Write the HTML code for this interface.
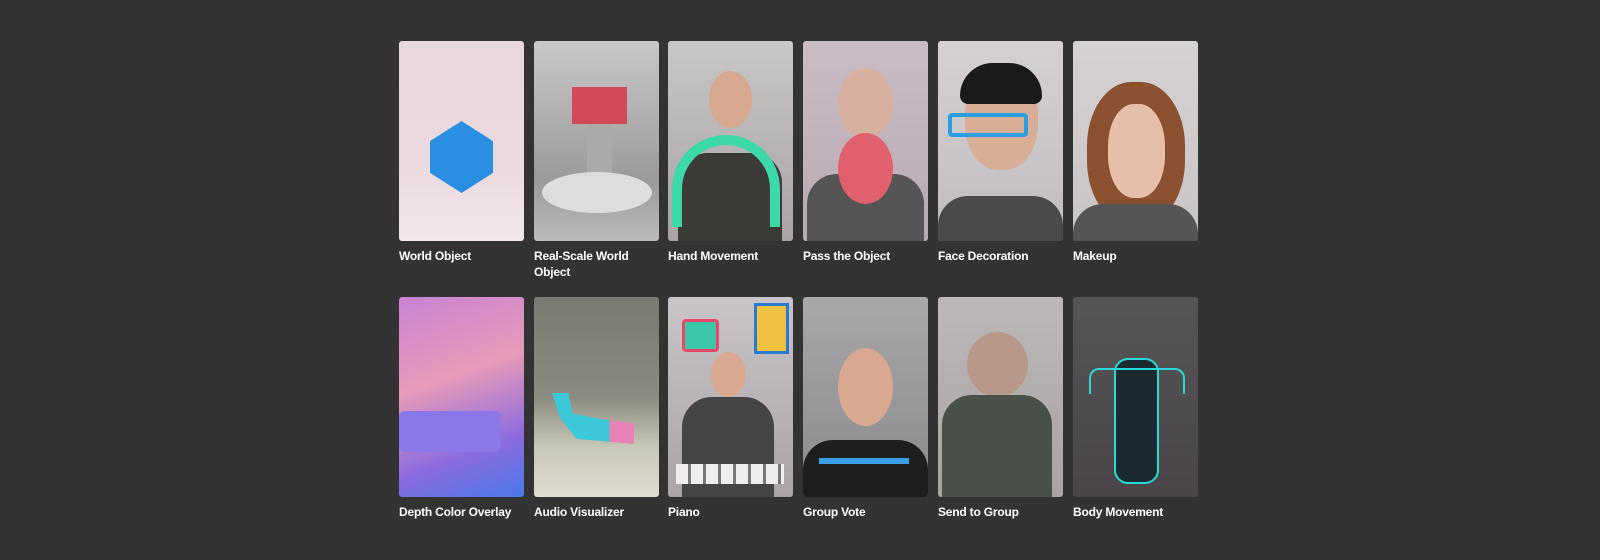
<!DOCTYPE html><html><head><style>
body{margin:0;background:#333;width:1600px;height:560px;overflow:hidden;font-family:"Liberation Sans",sans-serif}
.c{position:absolute;width:125px}
.i{width:125px;height:200px;border-radius:3px;overflow:hidden;position:relative}
.t{color:#fff;font-weight:bold;font-size:12px;line-height:15.5px;margin-top:8px;letter-spacing:-0.2px}
.s{position:absolute}
</style></head><body>
<div class="c" style="left:399px;top:41px"><div class="i" style="background:linear-gradient(#e8d8dc 0,#ead9de 60%,#f2e6e8 100%)"><div class="s" style="left:31px;top:80px;width:63px;height:72px;background:#2a8fe0;clip-path:polygon(50% 0,100% 28%,100% 72%,50% 100%,0 72%,0 28%)"></div></div><div class="t">World Object</div></div>
<div class="c" style="left:534px;top:41px"><div class="i" style="background:linear-gradient(#c8c8c8,#9a9a9a 70%,#bbb)"><div class="s" style="left:38px;top:46px;width:55px;height:37px;background:#d24a5a"></div><div class="s" style="left:53px;top:83px;width:25px;height:61px;background:#aaa"></div><div class="s" style="left:8px;top:131px;width:110px;height:41px;border-radius:50%;background:#ddd"></div></div><div class="t">Real-Scale World Object</div></div>
<div class="c" style="left:668px;top:41px"><div class="i" style="background:linear-gradient(#c9c6c8,#a8a4a6)"><div class="s" style="left:41px;top:30px;width:43px;height:57px;border-radius:50%;background:#d6a890"></div><div class="s" style="left:10px;top:112px;width:104px;height:92px;background:#3a3a36;border-radius:30px 30px 0 0"></div><div class="s" style="left:4px;top:94px;width:108px;height:92px;border-radius:60px 60px 0 0;border:10px solid #3cd8a8;border-bottom:none;box-sizing:border-box"></div></div><div class="t">Hand Movement</div></div>
<div class="c" style="left:803px;top:41px"><div class="i" style="background:linear-gradient(#c9bcc4,#b8aab2)"><div class="s" style="left:35px;top:27px;width:55px;height:71px;border-radius:50%;background:#d8b0a0"></div><div class="s" style="left:4px;top:133px;width:117px;height:71px;background:#555;border-radius:30px 30px 0 0"></div><div class="s" style="left:35px;top:92px;width:55px;height:71px;border-radius:50%;background:#e0606e"></div></div><div class="t">Pass the Object</div></div>
<div class="c" style="left:938px;top:41px"><div class="i" style="background:linear-gradient(#d4d0d4,#c0bcc0)"><div class="s" style="left:27px;top:27px;width:73px;height:102px;border-radius:45%;background:#d8ad95"></div><div class="s" style="left:22px;top:22px;width:82px;height:41px;border-radius:40px 40px 10px 10px;background:#1a1a1a"></div><div class="s" style="left:10px;top:72px;width:80px;height:24px;border:4px solid #2a9ee0;box-sizing:border-box;border-radius:4px"></div><div class="s" style="left:0;top:155px;width:125px;height:50px;background:#4a4a4a;border-radius:30px 30px 0 0"></div></div><div class="t">Face Decoration</div></div>
<div class="c" style="left:1073px;top:41px"><div class="i" style="background:linear-gradient(#d6d2d4,#c8c4c6)"><div class="s" style="left:14px;top:41px;width:98px;height:143px;border-radius:45%;background:#8a5030"></div><div class="s" style="left:35px;top:63px;width:57px;height:94px;border-radius:45%;background:#e6bfaa"></div><div class="s" style="left:0;top:163px;width:125px;height:41px;background:#555;border-radius:30px 30px 0 0"></div></div><div class="t">Makeup</div></div>

<div class="c" style="left:399px;top:297px"><div class="i" style="background:linear-gradient(160deg,#c882d4,#e89ab8 40%,#8a6ae0 75%,#4a7ae8)"><div class="s" style="left:0;top:114px;width:102px;height:41px;background:#8a78e8;border-radius:6px"></div></div><div class="t">Depth Color Overlay</div></div>
<div class="c" style="left:534px;top:297px"><div class="i" style="background:linear-gradient(#7a7a72,#8a8a80 50%,#c8c8b8 75%,#e0dcd0)"><div class="s" style="left:18px;top:96px;width:82px;height:51px;background:linear-gradient(90deg,#3cc8d8 70%,#e880b8 70%);clip-path:polygon(0 0,20% 0,25% 40%,55% 50%,100% 60%,100% 100%,30% 90%,10% 50%)"></div></div><div class="t">Audio Visualizer</div></div>
<div class="c" style="left:668px;top:297px"><div class="i" style="background:linear-gradient(#c8c4c8,#a8a4a8)"><div class="s" style="left:14px;top:22px;width:31px;height:27px;background:#3cc8a8;border:3px solid #e84868;border-radius:4px"></div><div class="s" style="left:86px;top:6px;width:29px;height:45px;background:#f0c040;border:3px solid #2a7ad0"></div><div class="s" style="left:43px;top:55px;width:35px;height:45px;border-radius:50%;background:#d8a890"></div><div class="s" style="left:14px;top:100px;width:92px;height:102px;background:#444;border-radius:30px 30px 0 0"></div><div class="s" style="left:8px;top:167px;width:108px;height:20px;background:repeating-linear-gradient(90deg,#eee 0 12px,#777 12px 15px)"></div></div><div class="t">Piano</div></div>
<div class="c" style="left:803px;top:297px"><div class="i" style="background:linear-gradient(#a8a8aa,#8a8a8c)"><div class="s" style="left:35px;top:51px;width:55px;height:78px;border-radius:50%;background:#d8a890"></div><div class="s" style="left:0;top:143px;width:125px;height:61px;background:#1e1e1e;border-radius:30px 30px 0 0"></div><div class="s" style="left:16px;top:161px;width:90px;height:6px;background:#3a9ee8"></div></div><div class="t">Group Vote</div></div>
<div class="c" style="left:938px;top:297px"><div class="i" style="background:linear-gradient(#bcb8b8,#a8a4a4)"><div class="s" style="left:29px;top:35px;width:61px;height:65px;border-radius:50%;background:#b89888"></div><div class="s" style="left:4px;top:98px;width:110px;height:106px;background:#485048;border-radius:30px 30px 0 0"></div></div><div class="t">Send to Group</div></div>
<div class="c" style="left:1073px;top:297px"><div class="i" style="background:linear-gradient(#555,#4a4548)"><div class="s" style="left:41px;top:61px;width:41px;height:122px;background:#1a2a30;border:2px solid #2ad8d8;border-radius:14px"></div><div class="s" style="left:16px;top:71px;width:92px;height:24px;border:2px solid #2ad8d8;border-bottom:none;border-radius:10px 10px 0 0"></div></div><div class="t">Body Movement</div></div>
</body></html>
